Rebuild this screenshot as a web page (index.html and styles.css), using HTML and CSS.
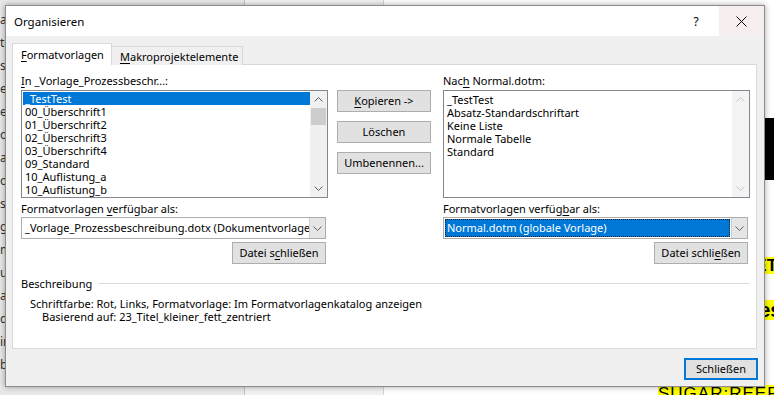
FILE: index.html
```html
<!DOCTYPE html>
<html lang="de">
<head>
<meta charset="utf-8">
<title>Organisieren</title>
<link rel="stylesheet" href="styles.css">
</head>
<body>
<div class="desk">
  <div class="side">
    <div class="side-top"></div>
    <div class="side-line">as</div>
    <div class="side-line">ti</div>
    <div class="side-line">ss</div>
    <div class="side-line">ex</div>
    <div class="side-line">ex</div>
    <div class="side-line">o</div>
    <div class="side-line">a</div>
    <div class="side-line">oc</div>
    <div class="side-line">s</div>
    <div class="side-line">gu</div>
    <div class="side-line">m</div>
    <div class="side-line">u</div>
    <div class="side-line">a</div>
    <div class="side-line">de</div>
    <div class="side-line">ir</div>
    <div class="side-line">bactio</div>
  </div>
  <div class="pane"></div>
  <div class="doc">
    <div class="dark"></div>
    <div class="hl hl1">SET·F</div>
    <div class="hl hl2">Test es</div>
    <div class="hl hl3">SUGAR:REEF</div>
  </div>

  <div class="dialog">
    <div class="titlebar">
      <span class="title">Organisieren</span>
      <span class="help">?</span>
      <span class="close">
        <svg width="11" height="11" viewBox="0 0 11 11"><path d="M0.5 0.5 L10.5 10.5 M10.5 0.5 L0.5 10.5" stroke="#000" stroke-width="1" fill="none"/></svg>
      </span>
    </div>
    <div class="body">
      <div class="tabs">
        <div class="tab active"><u>F</u>ormatvorlagen</div>
        <div class="tab"><u>M</u>akroprojektelemente</div>
      </div>
      <div class="panel">
        <div class="cols">
          <div class="col">
            <div class="label"><u>I</u>n _Vorlage_Prozessbeschr...:</div>
            <div class="listbox">
              <div class="items">
                <div class="item sel">_TestTest</div>
                <div class="item">00_Überschrift1</div>
                <div class="item">01_Überschrift2</div>
                <div class="item">02_Überschrift3</div>
                <div class="item">03_Überschrift4</div>
                <div class="item">09_Standard</div>
                <div class="item">10_Auflistung_a</div>
                <div class="item">10_Auflistung_b</div>
              </div>
              <div class="sb">
                <div class="sb-btn"><svg width="9" height="5" viewBox="0 0 9 5"><polyline points="0.5,4.5 4.5,0.5 8.5,4.5" fill="none" stroke="#606060"/></svg></div>
                <div class="sb-track"><div class="sb-thumb"></div></div>
                <div class="sb-btn"><svg width="9" height="5" viewBox="0 0 9 5"><polyline points="0.5,0.5 4.5,4.5 8.5,0.5" fill="none" stroke="#606060"/></svg></div>
              </div>
            </div>
            <div class="label label2">Formatvorlagen <u>v</u>erfügbar als:</div>
            <div class="combo">
              <div class="combo-text">_Vorlage_Prozessbeschreibung.dotx (Dokumentvorlage)</div>
              <div class="combo-btn"><svg width="9" height="5" viewBox="0 0 9 5"><polyline points="0.5,0.5 4.5,4.5 8.5,0.5" fill="none" stroke="#606060"/></svg></div>
            </div>
            <div class="btn-row"><button class="btn btn-close">Datei s<u>c</u>hließen</button></div>
          </div>

          <div class="mid">
            <button class="btn btn-mid"><u>K</u>opieren -&gt;</button>
            <button class="btn btn-mid">Löschen</button>
            <button class="btn btn-mid">Umbenennen...</button>
          </div>

          <div class="col col-right">
            <div class="label">Nac<u>h</u> Normal.dotm:</div>
            <div class="listbox">
              <div class="items items-right">
                <div class="item">_TestTest</div>
                <div class="item">Absatz-Standardschriftart</div>
                <div class="item">Keine Liste</div>
                <div class="item">Normale Tabelle</div>
                <div class="item">Standard</div>
              </div>
              <div class="sb sb-off">
                <div class="sb-btn"><svg width="9" height="5" viewBox="0 0 9 5"><polyline points="0.5,4.5 4.5,0.5 8.5,4.5" fill="none" stroke="#c5c5c5"/></svg></div>
                <div class="sb-track"></div>
                <div class="sb-btn"><svg width="9" height="5" viewBox="0 0 9 5"><polyline points="0.5,0.5 4.5,4.5 8.5,0.5" fill="none" stroke="#c5c5c5"/></svg></div>
              </div>
            </div>
            <div class="label label2">Formatvorlagen verfüg<u>b</u>ar als:</div>
            <div class="combo">
              <div class="combo-text"><span class="combo-sel">Normal.dotm (globale Vorlage)</span></div>
              <div class="combo-btn"><svg width="9" height="5" viewBox="0 0 9 5"><polyline points="0.5,0.5 4.5,4.5 8.5,0.5" fill="none" stroke="#606060"/></svg></div>
            </div>
            <div class="btn-row"><button class="btn btn-close">Datei schli<u>e</u>ßen</button></div>
          </div>
        </div>

        <div class="group">
          <div class="group-head"><span class="group-label">Beschreibung</span><span class="group-line"></span></div>
          <div class="desc1">Schriftfarbe: Rot, Links, Formatvorlage: Im Formatvorlagenkatalog anzeigen</div>
          <div class="desc2">Basierend auf: 23_Titel_kleiner_fett_zentriert</div>
        </div>
      </div>
      <div class="footer">
        <button class="btn btn-primary">Schließen</button>
      </div>
    </div>
  </div>
</div>
</body>
</html>
```

FILE: styles.css
```css
* { box-sizing: border-box; }
html, body { margin: 0; padding: 0; }
body {
  width: 774px;
  height: 395px;
  overflow: hidden;
  font-family: "Noto Sans", "Open Sans", sans-serif;
  font-size: 11px;
  color: #000;
}
u { text-decoration: underline; text-underline-offset: 2px; }

.desk {
  position: relative;
  width: 774px;
  height: 395px;
  display: flex;
  background: #fff;
}
.side {
  width: 245px;
  background: #e8e8e8;
  border-right: 1px solid #c6c6c6;
  overflow: hidden;
}
.side-top { height: 8px; }
.side-line {
  height: 23px;
  line-height: 23px;
  color: #333;
  font-size: 12px;
  white-space: nowrap;
}
.pane {
  width: 139px;
  background: #f2f2f2;
  border-right: 1px solid #d4d4d4;
}
.doc {
  flex: 1;
  background: #fff;
  overflow: hidden;
}
.dark {
  margin-top: 118px;
  margin-left: 370px;
  height: 62px;
  background: #000;
}
.hl {
  background: #ffff00;
  font-weight: bold;
  font-family: "Liberation Sans", sans-serif;
  font-size: 17px;
  line-height: 17px;
  white-space: nowrap;
  width: max-content;
}
.hl1 { margin-top: 77px; margin-left: 360px; }
.hl2 { margin-top: 26px; margin-left: 330px; font-size: 20px; line-height: 20px; }
.hl3 { margin-top: 65px; margin-left: 274px; font-weight: normal; font-size: 17px; letter-spacing: 1px; }

/* dialog window */
.dialog {
  position: absolute;
  left: 5px;
  top: 5px;
  width: 760px;
  height: 382px;
  border: 1px solid #8c8c8c;
  background: #f0f0f0;
  box-shadow: 0 0 6px rgba(0,0,0,0.35);
  display: flex;
  flex-direction: column;
}
.titlebar {
  height: 30px;
  background: #fff;
  display: flex;
  align-items: center;
  flex-shrink: 0;
}
.title {
  margin-left: 8px;
  flex: 1;
  font-size: 11.5px;
}
.help {
  width: 38px;
  text-align: center;
  margin-right: 4px;
  font-size: 12px;
}
.close {
  width: 45px;
  height: 30px;
  background: #f7efef;
  display: flex;
  align-items: center;
  justify-content: center;
}

.body {
  flex: 1;
  padding: 7px 6px 0 6px;
  display: flex;
  flex-direction: column;
}
.tabs {
  display: flex;
  align-items: flex-end;
  height: 22px;
  position: relative;
  z-index: 1;
}
.tab {
  height: 19px;
  line-height: 19px;
  padding: 0 0 0 8px;
  border: 1px solid #d9d9d9;
  border-bottom: none;
  background: #f0f0f0;
  white-space: nowrap;
}
.tab.active {
  height: 22px;
  line-height: 21px;
  background: #fff;
  width: 100px;
  padding: 0 0 0 8px;
}
.tab + .tab {
  border-left: none;
  width: 131px;
}
.panel {
  margin-top: -1px;
  width: 745px;
  height: 285px;
  border: 1px solid #d9d9d9;
  background: #fff;
  padding: 8px 6px 0 8px;
}
.cols {
  display: flex;
}
.col {
  width: 307px;
  display: flex;
  flex-direction: column;
}
.col-right { margin-left: 12px; }
.label {
  height: 16px;
  line-height: 16px;
  margin-bottom: 1px;
  white-space: nowrap;
}
.label2 { margin-top: 3px; margin-bottom: 0; }

.listbox {
  height: 108px;
  border: 1px solid #828790;
  display: flex;
  background: #fff;
}
.items {
  flex: 1;
  padding: 1px 0 0 1px;
  overflow: hidden;
}
.items-right { padding-left: 0; padding-top: 2px; }
.item {
  height: 13px;
  line-height: 13px;
  padding-left: 2px;
  white-space: nowrap;
}
.items-right .item { padding-left: 3px; }
.item.sel {
  background: #0078d7;
  color: #fff;
}
.sb {
  width: 17px;
  background: #f0f0f0;
  display: flex;
  flex-direction: column;
}
.sb-off { background: #f4f4f4; }
.sb-btn {
  height: 17px;
  display: flex;
  align-items: center;
  justify-content: center;
}
.sb-track { flex: 1; }
.sb-thumb {
  height: 17px;
  margin: 0 1px;
  background: #cdcdcd;
}

.combo {
  width: 305px;
  height: 22px;
  border: 1px solid #adadad;
  background: #fff;
  display: flex;
}
.combo-text {
  flex: 1;
  padding: 1px;
  white-space: nowrap;
  overflow: hidden;
  line-height: 18px;
}
.combo-text:not(:has(.combo-sel)) { padding-left: 3px; }
.combo-sel {
  display: block;
  height: 18px;
  background: #0078d7;
  color: #fff;
  padding-left: 2px;
  outline: 1px dotted #1f1f1f;
  outline-offset: -1px;
}
.combo-btn {
  width: 16px;
  background: #e5e5e5;
  border-left: 1px solid #cfcfcf;
  display: flex;
  align-items: center;
  justify-content: center;
}

.btn {
  font-family: inherit;
  font-size: 11px;
  color: #000;
  background: #e1e1e1;
  border: 1px solid #adadad;
  height: 22px;
  padding: 0;
  margin: 0;
  line-height: 18px;
}
.btn-row {
  display: flex;
  justify-content: flex-end;
  margin-top: 3px;
  width: 305px;
}
.btn-close { width: 94px; }
.mid {
  margin-left: 9px;
  margin-top: 17px;
  display: flex;
  flex-direction: column;
  gap: 9px;
  width: 94px;
}
.btn-mid { width: 94px; }

.group {
  margin-top: 11px;
}
.group-head {
  display: flex;
  align-items: center;
  height: 16px;
  width: 729px;
}
.group-label { padding-right: 6px; }
.group-line {
  flex: 1;
  height: 1px;
  background: #dcdcdc;
}
.desc1 {
  margin-top: 6px;
  margin-left: 9px;
  line-height: 13px;
}
.desc2 {
  margin-left: 21px;
  line-height: 13px;
}

.footer {
  display: flex;
  justify-content: flex-end;
  padding-top: 9px;
}
.btn-primary {
  width: 74px;
  border: 2px solid #0078d7;
}
```
